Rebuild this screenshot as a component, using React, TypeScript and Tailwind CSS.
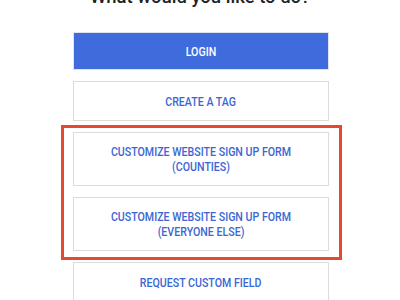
import React from "react";

const label = "font-['Roboto',sans-serif] text-[12.5px] leading-[15px] font-medium uppercase whitespace-nowrap";

function Label({ children }: { children: React.ReactNode }) {
  return <span className="block scale-x-[0.85]">{children}</span>;
}

function OutlineButton({ lines, h }: { lines: string[]; h: string }) {
  return (
    <button className={`w-[256px] ${h} bg-white border border-[#dcdcdc] flex flex-col items-center justify-center text-[#3b66d4] ${label}`}>
      {lines.map((l, i) => (
        <Label key={i}>{l}</Label>
      ))}
    </button>
  );
}

export default function App() {
  return (
    <div className="w-[400px] h-[300px] bg-white overflow-hidden relative">
      <h1 className="absolute left-0 right-0 -top-[15px] text-center text-[18.5px] leading-[24px] font-medium text-[#222] font-['Roboto',sans-serif]">
        What would you like to do?
      </h1>
      <div className="flex flex-col items-center gap-[11px] pt-[32px] pl-[2px]">
        <button className={`w-[256px] h-[38px] bg-[#3f6bdc] border border-[#dfe3ec] text-white flex items-center justify-center ${label}`}>
          <Label>Login</Label>
        </button>
        <OutlineButton lines={["Create a Tag"]} h="h-[40px]" />
        <div className="relative flex flex-col gap-[11px]">
          <div className="absolute -top-[7px] -bottom-[9px] -left-[12px] -right-[13px] border-[3px] border-[#e34a2e] pointer-events-none" />
          <OutlineButton lines={["Customize Website Sign Up Form", "(Counties)"]} h="h-[54px]" />
          <OutlineButton lines={["Customize Website Sign Up Form", "(Everyone Else)"]} h="h-[54px]" />
        </div>
        <OutlineButton lines={["Request Custom Field"]} h="h-[40px]" />
      </div>
    </div>
  );
}
